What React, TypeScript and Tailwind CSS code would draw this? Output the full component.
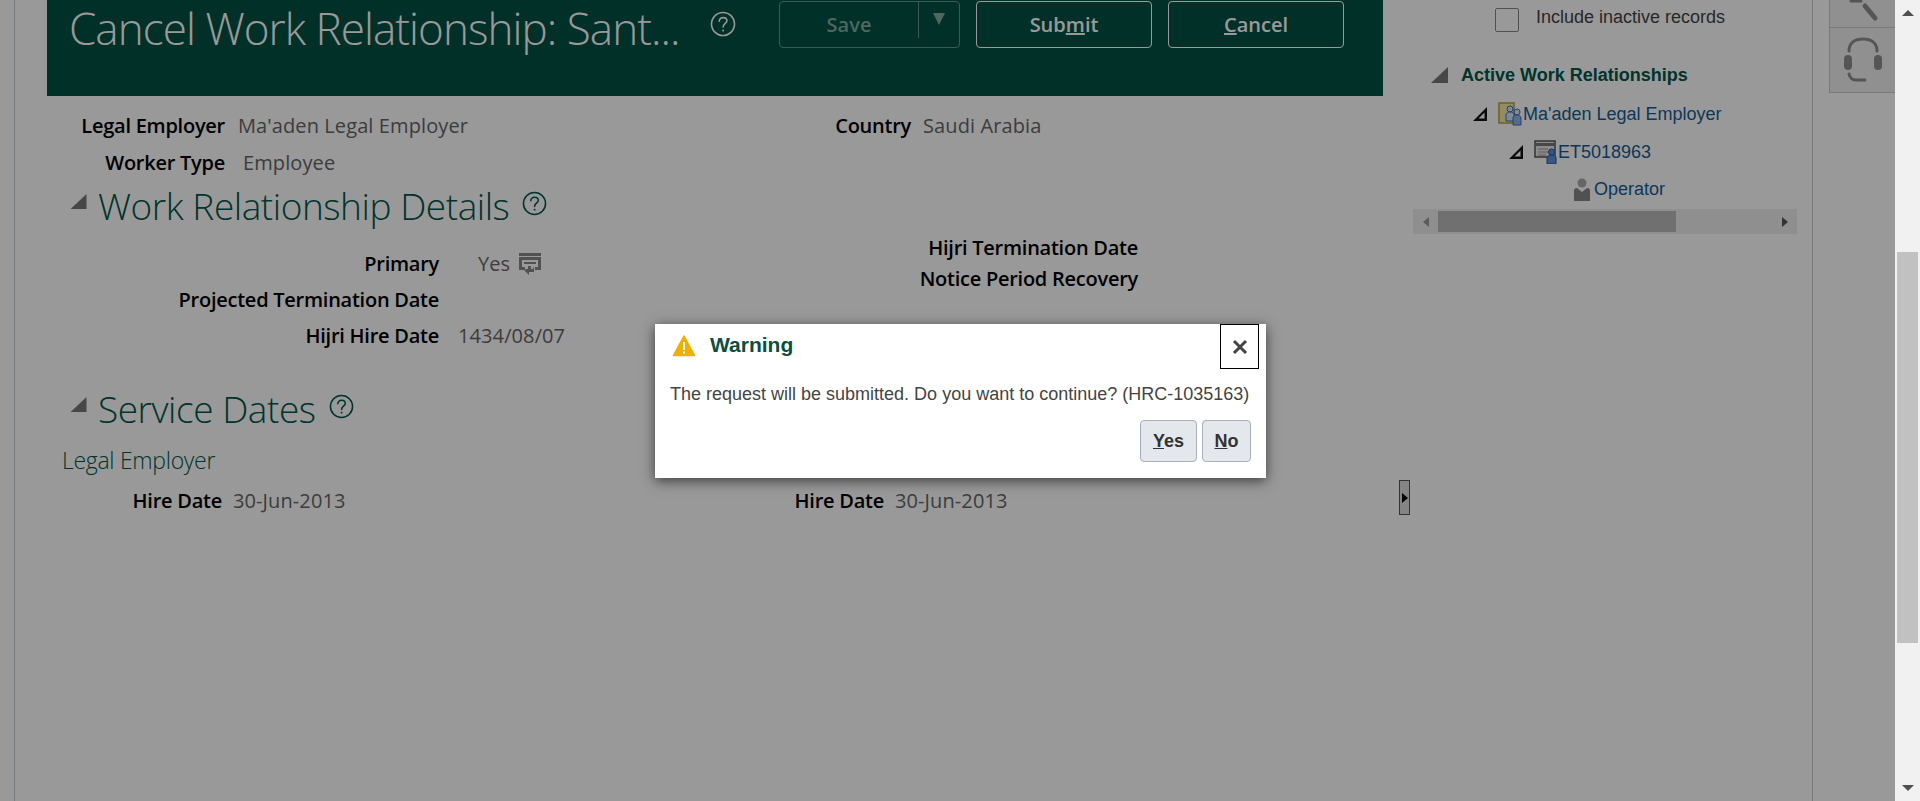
import React from "react";

const seg = "font-['Open_Sans',sans-serif]";
const arial = "font-['Liberation_Sans',Arial,sans-serif]";

function Help({ className }: { className?: string }) {
  return (
    <svg viewBox="0 0 26 26" className={className} fill="none" stroke="currentColor" strokeWidth="1.6">
      <circle cx="13" cy="13" r="11.5" />
      <path d="M9.2 10.2c0-2.2 1.7-3.6 3.9-3.6s3.8 1.3 3.8 3.2c0 2.900-3.800 2.900-3.800 6.200" strokeLinecap="round" />
      <circle cx="13.100" cy="19.400" r="1" fill="currentColor" stroke="none" />
    </svg>
  );
}

function Disclosure({ className }: { className?: string }) {
  return (
    <svg viewBox="0 0 17 16" className={className}>
      <path d="M17 0V16H0Z" fill="#777" />
    </svg>
  );
}

function SectionTitle({ title }: { title: string }) {
  return (
    <div className="flex items-center">
      <Disclosure className="w-[17px] h-[15px] mb-[10px] mr-[11px]" />
      <h2 className={`${seg} font-light text-[37px] leading-[48px] text-[#00574a] tracking-[-0.45px]`}>{title}</h2>
      <Help className="w-[25px] h-[25px] ml-[13px] mb-[6px] text-[#00574a]" />
    </div>
  );
}

function Field({ label, value, labelWidth, gap = 13, children }: { label: string; value?: string; labelWidth: number; gap?: number; children?: React.ReactNode }) {
  return (
    <div className={`${seg} flex items-center text-[20px] leading-[26px]`}>
      <span className="text-right font-semibold text-black shrink-0 tracking-[-0.25px]" style={{ width: labelWidth }}>{label}</span>
      {value && <span className="text-[#666] font-medium tracking-[0.1px]" style={{ marginLeft: gap }}>{value}</span>}
      {children}
    </div>
  );
}

function HeaderButton({ children }: { children: React.ReactNode }) {
  return (
    <button className={`${seg} w-[176px] h-[47px] border border-white rounded-[4px] text-white font-semibold text-[20px]`}>{children}</button>
  );
}

function TreeTriangle({ className }: { className?: string }) {
  return (
    <svg viewBox="0 0 14 14" className={className}>
      <path d="M14 0V14H0ZM11.500 5.500L5.500 11.500H11.500Z" fill="#111" fillRule="evenodd" />
    </svg>
  );
}

function OrgIcon() {
  return (
    <svg viewBox="0 0 25 24" className="w-[25px] h-[24px] shrink-0">
      <rect x="1" y="1" width="15" height="20" fill="#f5e9a8" stroke="#b8a030" strokeWidth="1.500" />
      <circle cx="12" cy="7" r="3" fill="#d5e6f7" stroke="#3a6fb5" />
      <path d="M8 19v-6c0-2 2-3 4-3s4 1 4 3v6Z" fill="#d5e6f7" stroke="#3a6fb5" />
      <circle cx="19" cy="10" r="3" fill="#d5e6f7" stroke="#3a6fb5" />
      <path d="M15 23v-7c0-2 2-3 4-3s4 1 4 3v7Z" fill="#8fb4e6" stroke="#3a6fb5" />
    </svg>
  );
}

function AssignmentIcon() {
  return (
    <svg viewBox="0 0 24 24" className="w-[24px] h-[24px] shrink-0">
      <rect x="1" y="1" width="20" height="16" fill="#e8e8e8" stroke="#555" strokeWidth="1.500" />
      <path d="M1 3h20v3H1Z" fill="#777" />
      <path d="M4 9h10M4 12h10M4 15h8" stroke="#999" />
      <circle cx="17.500" cy="12" r="3" fill="#5c8fdc" stroke="#2c55a5" />
      <path d="M13 24v-6c0-2 2-3 4.500-3s4.500 1 4.500 3v6Z" fill="#5c8fdc" stroke="#2c55a5" />
    </svg>
  );
}

function PersonIcon() {
  return (
    <svg viewBox="0 0 16 23" className="w-[16px] h-[23px] shrink-0">
      <circle cx="8" cy="5" r="4.500" fill="#aaa" />
      <path d="M0 23V13c0-2 1-3 3-3l5 4 5-4c2 0 3 1 3 3v10Z" fill="#888" />
    </svg>
  );
}

function ChangeIcon() {
  return (
    <svg viewBox="0 0 22 22" className="w-[22px] h-[22px] ml-[9px] text-[#888]" fill="currentColor">
      <path d="M0 0h22v3H0ZM0 4h22v13h-6v-3h3V7H3v7h3v3H0Z" />
      <path d="M5 9h12v2H5Z" />
      <path d="M15 13v3h-3v-3H9v3H8l-3 1 5 5v-3h5v-3h-1Z" />
    </svg>
  );
}

export default function App() {
  return (
    <div className="flex w-full h-[801px] overflow-hidden bg-white">
      <div className="relative flex-1 flex min-w-0">
        <div className="w-[15px] border-r border-[#c8d0d8] shrink-0" />

        {/* main column */}
        <div className="ml-[32px] w-[1336px] shrink-0">
          <div className="h-[96px] bg-[#005043] flex items-start pl-[22px]">
            <h1 className={`${seg} font-light text-white text-[44px] leading-[56px] w-[641px] shrink-0 whitespace-nowrap tracking-[-0.95px]`}>Cancel Work Relationship: Sant...</h1>
            <Help className="w-[26px] h-[26px] mt-[11px] text-white shrink-0" />
            <div className="flex items-start gap-[16px] ml-[43px] mt-px">
              <div className={`${seg} flex w-[181px] h-[47px] border border-[#5f9a8e] rounded-[4px] text-[#7fae9f] font-semibold text-[20px]`}>
                <span className="w-[138px] pt-[8px] text-center">Save</span>
                <span className="w-px h-[36px] bg-[#5f9a8e]" />
                <span className="flex-1 flex justify-center pt-[11px]">
                  <svg viewBox="0 0 12 12" className="w-[12px] h-[12px]"><path d="M0 0h12L6 12Z" fill="#7fae9f" /></svg>
                </span>
              </div>
              <HeaderButton>Sub<u>m</u>it</HeaderButton>
              <HeaderButton><u>C</u>ancel</HeaderButton>
            </div>
          </div>

          <div className="flex items-start pt-[17px]">
            <div className="w-[744px] shrink-0">
              <Field label="Legal Employer" value="Ma'aden Legal Employer" labelWidth={178} />
              <div className="mt-[11px]">
                <Field label="Worker Type" value="Employee" labelWidth={178} gap={18} />
              </div>
            </div>
            <Field label="Country" value="Saudi Arabia" labelWidth={120} gap={12} />
          </div>

          <div className="ml-[23px] mt-[6px]">
            <SectionTitle title="Work Relationship Details" />
          </div>

          <div className="flex items-start mt-[21px]">
            <div className="w-[687px] shrink-0">
              <Field label="Primary" labelWidth={392}>
                <span className="ml-[39px] text-[#666] font-medium">Yes</span>
                <ChangeIcon />
              </Field>
              <div className="mt-[10px]"><Field label="Projected Termination Date" labelWidth={392} /></div>
              <div className="mt-[10px]"><Field label="Hijri Hire Date" value="1434/08/07" labelWidth={392} gap={19} /></div>
            </div>
            <div className="-mt-[16px]">
              <Field label="Hijri Termination Date" labelWidth={404} />
              <div className="mt-[5px]"><Field label="Notice Period Recovery" labelWidth={404} /></div>
            </div>
          </div>

          <div className="ml-[23px] mt-[36px]">
            <SectionTitle title="Service Dates" />
          </div>
          <div className={`${seg} font-light text-[23px] leading-[30px] text-[#00574a] ml-[15px] mt-[12px] tracking-[-0.3px]`}>Legal Employer</div>
          <div className="flex items-start mt-[13px]">
            <div className="w-[649px] shrink-0"><Field label="Hire Date" value="30-Jun-2013" labelWidth={175} gap={11} /></div>
            <Field label="Hire Date" value="30-Jun-2013" labelWidth={188} gap={11} />
          </div>
        </div>

        {/* splitter + right pane */}
        <div className="w-[15px] shrink-0 flex items-start">
          <div className="mt-[480px] w-[11px] h-[35px] ml-[16px] border border-[#555] bg-[#ddd] flex items-center justify-center shrink-0">
            <svg viewBox="0 0 6 10" className="w-[6px] h-[10px]"><path d="M0 0l6 5-6 5Z" fill="#000" /></svg>
          </div>
        </div>

        <div className={`${arial} ml-[15px] w-[384px] shrink-0`}>
          <label className="flex items-start ml-[82px] text-[18px] leading-[20px] text-[#444]">
            <span className="w-[24px] h-[24px] mt-[8px] border border-[#888] rounded-[2px] bg-white shrink-0" />
            <span className="ml-[17px] mt-[7px]">Include inactive records</span>
          </label>
          <div className="flex items-center ml-[18px] mt-[31px] h-[24px]">
            <Disclosure className="w-[17px] h-[16px]" />
            <span className="ml-[13px] font-bold text-[18px] text-[#00574a]">Active Work Relationships</span>
          </div>
          <div className="flex items-center ml-[60px] mt-[15px] h-[24px]">
            <TreeTriangle className="w-[14px] h-[14px]" />
            <span className="ml-[11px]"><OrgIcon /></span>
            <span className="text-[18px] text-[#145c96]">Ma'aden Legal Employer</span>
          </div>
          <div className="flex items-center ml-[96px] mt-[14px] h-[24px]">
            <TreeTriangle className="w-[14px] h-[14px]" />
            <span className="ml-[11px]"><AssignmentIcon /></span>
            <span className="text-[18px] text-[#145c96]">ET5018963</span>
          </div>
          <div className="flex items-center ml-[161px] mt-[13px] h-[24px]">
            <PersonIcon />
            <span className="ml-[4px] text-[18px] text-[#145c96]">Operator</span>
          </div>
          <div className="flex items-center h-[25px] w-[384px] mt-[8px] bg-[#eee]">
            <span className="w-[25px] flex justify-center">
              <svg viewBox="0 0 6 10" className="w-[6px] h-[10px]"><path d="M6 0L0 5l6 5Z" fill="#999" /></svg>
            </span>
            <span className="w-[238px] h-[21px] bg-[#bbb]" />
            <span className="flex-1 flex justify-end pr-[9px]">
              <svg viewBox="0 0 6 10" className="w-[6px] h-[10px]"><path d="M0 0l6 5-6 5Z" fill="#555" /></svg>
            </span>
          </div>
        </div>

        <div className="ml-[15px] border-l border-[#ccc] flex-1 pl-[16px]">
          <div className="border-l border-b border-[#ccc] h-[28px] bg-[#f0f0f0] overflow-hidden flex justify-center">
            <svg viewBox="0 0 40 28" className="w-[40px] h-[28px]" fill="none" stroke="#8e8e8e" strokeWidth="5" strokeLinecap="round">
              <path d="M22 6l10 12" />
              <path d="M8 1h10" strokeWidth="3" />
            </svg>
          </div>
          <div className="border-l border-b border-[#ccc] h-[65px] bg-[#f0f0f0] flex items-center justify-center">
            <svg viewBox="0 0 40 46" className="w-[40px] h-[46px]" fill="none" stroke="#8e8e8e" strokeLinecap="round">
              <path d="M6 14C6 6 12 2 20 2s14 4 14 12" strokeWidth="3" />
              <rect x="1" y="18" width="8" height="15" rx="4" fill="#8e8e8e" stroke="none" />
              <rect x="31" y="18" width="8" height="15" rx="4" fill="#8e8e8e" stroke="none" />
              <path d="M6 37c1 4 3 6 7 6h9" strokeWidth="3" />
            </svg>
          </div>
        </div>

        {/* modal scrim */}
        <div className="absolute inset-0 bg-black/40" />

        {/* warning dialog */}
        <div className={`${arial} absolute left-[655px] top-[324px] w-[611px] h-[154px] bg-white shadow-[0_3px_12px_rgba(0,0,0,0.6)]`}>
          <div className="flex items-start">
            <svg viewBox="0 0 22 22" className="w-[22px] h-[22px] ml-[18px] mt-[11px]">
              <path d="M11 1L21.500 20.500H.5Z" fill="#f0b000" stroke="#f0b000" strokeWidth="1.500" strokeLinejoin="round" />
              <path d="M10 7h2v8h-2ZM10 16.500h2v2h-2Z" fill="#fff" />
            </svg>
            <span className="ml-[15px] mt-[9px] font-bold text-[21px] leading-[24px] text-[#0a4f40]">Warning</span>
            <button className="ml-auto mr-[7px] w-[39px] h-[45px] border border-black flex items-center justify-center">
              <svg viewBox="0 0 16 16" className="w-[16px] h-[16px]"><path d="M2 2l12 12M14 2L2 14" stroke="#444" strokeWidth="3" /></svg>
            </button>
          </div>
          <p className="ml-[15px] mt-[15px] text-[18px] leading-[20px] text-[#444] whitespace-nowrap">The request will be submitted. Do you want to continue? (HRC-1035163)</p>
          <div className="flex justify-end gap-[5px] pr-[15px] mt-[16px]">
            <button className="w-[57px] h-[42px] border border-[#a8b0b8] rounded-[4px] bg-[#e4e8ec] font-bold text-[18px] text-[#333]"><u>Y</u>es</button>
            <button className="w-[49px] h-[42px] border border-[#a8b0b8] rounded-[4px] bg-[#e4e8ec] font-bold text-[18px] text-[#333]"><u>N</u>o</button>
          </div>
        </div>
      </div>

      {/* page scrollbar */}
      <div className="w-[25px] shrink-0 bg-[#f1f1f1] flex flex-col items-center">
        <svg viewBox="0 0 12 6" className="w-[12px] h-[6px] mt-[10px] shrink-0"><path d="M6 0l6 6H0Z" fill="#505050" /></svg>
        <div className="w-[21px] h-[391px] mt-[236px] bg-[#c1c1c1] shrink-0" />
        <svg viewBox="0 0 12 6" className="w-[12px] h-[6px] mt-auto mb-[10px] shrink-0"><path d="M6 6l6-6H0Z" fill="#505050" /></svg>
      </div>
    </div>
  );
}
